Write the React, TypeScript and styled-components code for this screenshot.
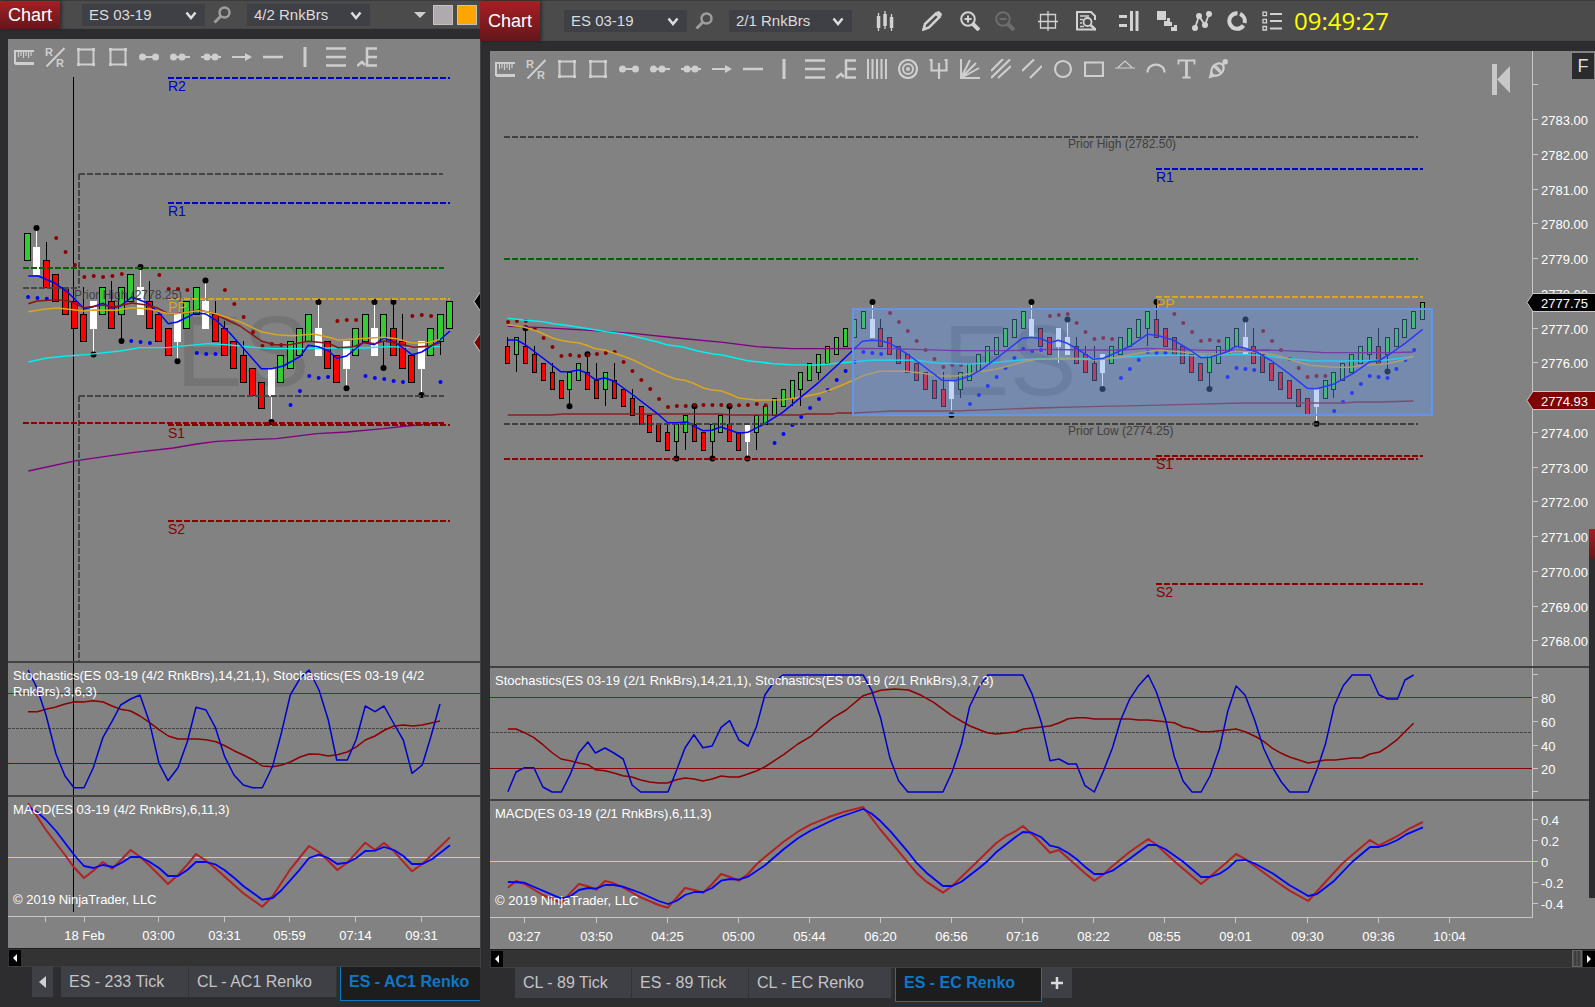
import React from 'react';
import styled, { createGlobalStyle } from 'styled-components';

const GlobalStyle = createGlobalStyle`
  *, *::before, *::after { box-sizing: border-box; }
  html, body { margin: 0; height: 100%; background: #2d2d30; }
  body { font-family: "Liberation Sans", Arial, sans-serif; overflow: hidden; }
  button, select { font: inherit; color: inherit; border: 0; margin: 0; padding: 0; }
`;

const SANS = '"Liberation Sans", Arial, sans-serif';

/* ---------- window frame ---------- */

const Desktop = styled.main`
  position: relative;
  display: flex;
  height: 100vh;
  background: #2d2d30;
`;

const Window = styled.section<{ $width?: number }>`
  display: flex;
  flex-direction: column;
  flex: ${(p) => (p.$width ? `0 0 ${p.$width}px` : '1 1 0')};
  min-width: 0;
  overflow: hidden;
`;

const TitleBar = styled.header<{ $height: number }>`
  display: flex;
  align-items: center;
  flex: none;
  height: ${(p) => p.$height}px;
  background: #4b4b4b;
  border-top: 1px solid #3c3c3e;
  box-shadow: inset 0 -1px 0 #454547;
`;

const WindowLabel = styled.h1`
  display: flex;
  align-items: center;
  align-self: stretch;
  flex: none;
  width: 60px;
  margin: 0;
  padding-left: 8px;
  font-size: 18px;
  font-weight: 400;
  color: #fff;
  background: linear-gradient(#a61f24, #64171a);
  box-shadow: 2px 0 3px rgba(0, 0, 0, 0.4);
`;

const PickerBox = styled.label`
  position: relative;
  display: flex;
  flex: none;
  width: 123px;
  height: 22px;
  color: #dcdcdc;
  background: #3f3f46;
`;

const PickerSelect = styled.select`
  width: 100%;
  padding-left: 7px;
  font-size: 15px;
  line-height: 22px;
  appearance: none;
  background: transparent;
`;

const PickerChevron = styled.svg`
  position: absolute;
  right: 8px;
  top: 7px;
  pointer-events: none;
`;

const PickerGroup = styled.div<{ $indent: number }>`
  display: flex;
  align-items: center;
  gap: 8px;
  flex: none;
  margin-left: ${(p) => p.$indent}px;
`;

const IconButton = styled.button<{ $size?: number }>`
  display: flex;
  align-items: center;
  justify-content: center;
  flex: none;
  width: ${(p) => p.$size ?? 22}px;
  height: ${(p) => p.$size ?? 22}px;
  background: transparent;
`;

const LinkGroup = styled.div`
  display: flex;
  align-items: center;
  gap: 4px;
  margin-left: auto;
  padding-right: 3px;
`;

const LinkSwatch = styled.button<{ $color: string }>`
  width: 20px;
  height: 20px;
  background: ${(p) => p.$color};
  border: 1px solid #c9c2bb;
`;

const ToolStrip = styled.div`
  display: grid;
  grid-template-columns: 47px 38px 35px 43px 38px 43px 38px 35px 35px 35px 22px;
  margin-left: 22px;
  color: #d2d2d2;
`;

const Clock = styled.time`
  margin-left: 11px;
  font-family: "Open Sans", "Noto Sans", sans-serif;
  font-size: 24px;
  line-height: 28px;
  color: #ffff00;
`;

const Body = styled.div`
  display: flex;
  flex-direction: column;
  flex: 1 1 0;
  min-height: 0;
  padding: 10px 0 0 8px;
`;

const RightBody = styled(Body)`
  padding-left: 9px;
  border-left: 1px solid #3f3f42;
`;

const ChartArea = styled.div`
  position: relative;
  display: flex;
  flex-direction: column;
  flex: 1 1 0;
  min-height: 0;
  background: #828282;
`;

const DrawingBar = styled.div<{ $left: number; $top: number; $width: number }>`
  position: absolute;
  z-index: 1;
  left: ${(p) => p.$left}px;
  top: ${(p) => p.$top}px;
  width: ${(p) => p.$width}px;
  display: flex;
  justify-content: space-between;
  color: #cecece;
`;

const Pane = styled.div<{ $height?: number }>`
  position: relative;
  display: flex;
  flex: ${(p) => (p.$height ? `0 0 ${p.$height}px` : '1 1 0')};
  min-height: 0;
  border-top: ${(p) => (p.$height ? '2px solid #414143' : '0')};
`;

const Plot = styled.svg`
  display: block;
  flex: 1 1 0;
  width: 0;
  min-width: 0;
  height: 100%;
`;

const Scale = styled.svg`
  display: block;
  flex: none;
  width: 63px;
  height: 100%;
  overflow: visible;
  border-left: 1px solid #c8c8c8;
`;

const TimeScale = styled.svg`
  display: block;
  flex: none;
  width: 100%;
  height: 32px;
`;

const PaneCaption = styled.p<{ $top?: number; $bottom?: number }>`
  position: absolute;
  left: 5px;
  ${(p) => (p.$bottom === undefined ? `top: ${p.$top}px;` : `bottom: ${p.$bottom}px;`)}
  max-width: calc(100% - 30px);
  margin: 0;
  font-size: 13px;
  line-height: 16px;
  color: #fff;
`;

const CornerButton = styled.button`
  position: absolute;
  z-index: 1;
  top: 2px;
  right: 1px;
  width: 22px;
  height: 26px;
  font-size: 18px;
  color: #dedede;
  background: #2b2b2e;
`;

const SkipButton = styled.button`
  position: absolute;
  z-index: 1;
  top: 13px;
  right: 84px;
  width: 19px;
  height: 31px;
  background: transparent;
`;

const ScrollTrack = styled.div`
  display: flex;
  align-items: center;
  flex: none;
  height: 19px;
  padding-left: 1px;
  background: #333334;
  border-top: 1px solid #1f1f20;
  border-bottom: 1px solid #3f3f42;
`;

const ScrollButton = styled.button`
  display: flex;
  align-items: center;
  justify-content: center;
  width: 12px;
  height: 16px;
  background: #000;
`;

const ScrollGrip = styled.button`
  width: 10px;
  height: 17px;
  margin-left: auto;
  margin-right: 1px;
  background: linear-gradient(90deg, #555, #333 40%, #777 50%, #333 60%, #555);
  border: 1px solid #666;
`;

const TabRow = styled.nav<{ $indent: number; $height: number }>`
  display: flex;
  align-items: flex-start;
  flex: none;
  height: ${(p) => p.$height}px;
  padding-left: ${(p) => p.$indent}px;
  white-space: nowrap;
`;

const Tab = styled.button<{ $width: number }>`
  flex: none;
  width: ${(p) => p.$width}px;
  height: 30px;
  padding-left: 8px;
  font-size: 16px;
  text-align: left;
  color: #c4c4c4;
  background: #3f3f46;
  border-right: 1px solid #333337;
`;

const ActiveTab = styled(Tab)`
  height: 34px;
  margin-left: 3px;
  padding-bottom: 4px;
  font-weight: 700;
  color: #0e78c8;
  background: #1d1d1e;
  border: 1px solid #0a76c4;
  border-top: 0;
`;

const SmallTab = styled.button<{ $width: number; $gap: number }>`
  display: flex;
  align-items: center;
  justify-content: center;
  flex: none;
  width: ${(p) => p.$width}px;
  height: 30px;
  margin-right: ${(p) => p.$gap}px;
  color: #dcdcdc;
  background: #3f3f46;
`;

const NeighbourEdge = styled.aside`
  position: absolute;
  z-index: 2;
  top: 529px;
  right: 0;
  width: 6px;
  height: 369px;
  background: linear-gradient(#a61f24, #64171a 29px, #2d2d30 30px);
`;

/* ---------- icons ---------- */

const Glyph = ({ children, size = 20 }: { children: React.ReactNode; size?: number }) => (
  <svg width={size} height={size} viewBox="0 0 20 20" fill="none" stroke="currentColor" strokeWidth="2">
    {children}
  </svg>
);

const region = (
  <>
    <path d="M3 2.5H17M3 17.500H17M2.500 3V17M17.500 3V17" />
    <path d="M1 1h3v3H1zM16 1h3v3h-3zM1 16h3v3H1zM16 16h3v3h-3z" fill="currentColor" stroke="none" />
  </>
);

const drawingTools: [string, React.ReactNode][] = [
  ['Ruler', <><path d="M20 4H1V16H20" /><path d="M1 16.500H20" strokeWidth="3" /><path d="M4.500 4v6M7 4v5M9.500 4v7M12 4v5M14.500 4v7M17 4v5" strokeWidth="1.2" /></>],
  ['Risk-Reward', <><path d="M1.500 19.500 19.500 1" /><text x="0" y="9" fontFamily={SANS} fontSize="11" fontWeight="700" fill="currentColor" stroke="none">R</text><text x="11" y="19.500" fontFamily={SANS} fontSize="11" fontWeight="700" fill="currentColor" stroke="none">R</text></>],
  ['Region Highlight X', region],
  ['Region Highlight Y', region],
  ['Line', <><path d="M3 10H17" /><g fill="currentColor" stroke="none"><circle cx="3.500" cy="10" r="3.500" /><circle cx="16.500" cy="10" r="3.500" /></g></>],
  ['Ray', <><path d="M3 10H20" /><g fill="currentColor" stroke="none"><circle cx="3.500" cy="10" r="3.500" /><circle cx="12" cy="10" r="3.500" /></g></>],
  ['Extended Line', <><path d="M0 10H20" /><g fill="currentColor" stroke="none"><circle cx="6" cy="10" r="3.500" /><circle cx="14" cy="10" r="3.500" /></g></>],
  ['Arrow Line', <><path d="M0 10H15" /><path d="M13 6 20 10 13 14z" fill="currentColor" stroke="none" /></>],
  ['Horizontal Line', <path d="M0 10H20" strokeWidth="2.500" />],
  ['Vertical Line', <path d="M10 0V20" strokeWidth="3" />],
  ['Fibonacci Retracements', <path d="M0 1.500H20M0 10H20M0 18.500H20" strokeWidth="2.500" />],
  ['Fibonacci Extensions', <><path d="M20 1.500H10V18.500H20M10 10H20" strokeWidth="2.500" /><path d="M0 19 5 15 8 18" strokeWidth="2.500" /></>],
  ['Fibonacci Time', <path d="M1 0V20M5.500 0V20M10 0V20M14.500 0V20M19 0V20" />],
  ['Fibonacci Circle', <><circle cx="10" cy="10" r="9" strokeWidth="2.200" /><circle cx="10" cy="10" r="5" /><circle cx="10" cy="10" r="2" fill="currentColor" stroke="none" /></>],
  ['Pitchfork', <path d="M2.500 0V11.500H17.500V0M10 4V20M0.500 1H3M15.500 1H18" strokeWidth="2.200" />],
  ['Gann Fan', <path d="M1 0V19H20M1 19 10 1M1 19 16 4M1 19 19 9" />],
  ['Regression Channel', <path d="M0 12 12 0M0 19 19 0.500M7 19 20 7" strokeWidth="2.200" />],
  ['Trend Channel', <path d="M0 12 12 0.500M8 19 20 7" strokeWidth="2.200" />],
  ['Ellipse', <circle cx="10" cy="10" r="8" strokeWidth="2.200" />],
  ['Rectangle', <path d="M1 3.500H19V17H1z" strokeWidth="2.200" />],
  ['Triangle', <path d="M3 8.500 10 2 17 8.500M0 9H20" strokeWidth="1.200" />],
  ['Arc', <path d="M1.500 13.500C1.500 3 18.500 3 18.500 13.500" strokeWidth="2.200" />],
  ['Text', <><path d="M9.500 1V19" strokeWidth="2.800" /><path d="M1.500 5.500V1.500H17.500V5.500M5.500 18.500H13.500" strokeWidth="1.800" /></>],
  ['Chart Marker', <><path d="M0.500 19.500 2.500 12.500 7.500 17.500z" fill="currentColor" stroke="none" /><ellipse cx="9.500" cy="10.500" rx="7" ry="5.300" transform="rotate(-45 9.500 10.500)" strokeWidth="2.200" /><path d="M6 7.500 13 14M15 5.500 18 2.500" strokeWidth="2" /><path d="M7.500 6.500 13 12" strokeWidth="1.500" /><circle cx="17.200" cy="2.800" r="2.700" fill="currentColor" stroke="none" /></>],
];

const chartTools: [string, React.ReactNode][] = [
  ['Bar style', <><path d="M3.500 2V20M10 0V18M16.500 3V20" strokeWidth="1.300" /><path d="M1.800 5h3.500v12H1.800zM8.300 3h3.500v12H8.300zM14.800 6h3.500v11h-3.500z" fill="currentColor" stroke="none" /></>],
  ['Drawing tools', <><path d="M3 13 14 2.500 17.500 6 7 16.500 1.500 18.500z" strokeWidth="2.500" /><path d="M14 1 19 6 20 3 17 0z" fill="currentColor" stroke="none" /></>],
  ['Zoom in', <><circle cx="8" cy="8" r="6.800" /><path d="M8 4.500V11.500M4.500 8H11.500" /><path d="M13 13 19 19" strokeWidth="4" /></>],
  ['Zoom out', <g opacity="0.25"><circle cx="8" cy="8" r="6.800" /><path d="M4.500 8H11.500" /><path d="M13 13 19 19" strokeWidth="4" /></g>],
  ['Cursor', <path d="M2.500 3.500H17.500V17H2.500zM10 0V20M0 10.500H20" strokeWidth="1.300" />],
  ['Data box', <><path d="M19 9V5L15 1H1V18.500H19" strokeWidth="2" /><path d="M4 5H13M4 8.500H7M4 12H6M4 15.500H8" strokeWidth="1.400" /><circle cx="11.500" cy="11" r="4" strokeWidth="1.800" /><path d="M14.500 14 20 19" strokeWidth="2.500" /></>],
  ['Chart trader', <><path d="M12.500 0V20M18 0V20" strokeWidth="3" /><path d="M1 5.500H8M1 14.500H8M0 5.500H4M0 14.500H4" strokeWidth="3" /></>],
  ['Data series', <path d="M0 0h9v9H0zM10 7h3v4h2v4H7v-5h3zM17 14h3v6h-6v-4h3z" fill="currentColor" stroke="none" />],
  ['Indicators', <><path d="M3 17 7 5 13 14 17 3" strokeWidth="1.800" /><g fill="currentColor" stroke="none"><circle cx="3" cy="17" r="3" /><circle cx="7" cy="5" r="3" /><circle cx="13" cy="14" r="3" /><circle cx="17" cy="3" r="3" /></g></>],
  ['Strategies', <path d="M10.500 2.200A7.800 7.800 0 1 0 16.500 14.500M13 2.800A7.800 7.800 0 0 1 17.500 12" strokeWidth="4" />],
  ['Properties', <><path d="M8 3H20M8 10H20M8 17.500H20" strokeWidth="2.200" /><path d="M1 1.200h3.500v3.500H1zM1 8.300h3.500v3.500H1zM1 15.500h3.500v3.500H1z" strokeWidth="1.300" /></>],
];

const SearchGlyph = () => (
  <svg width="18" height="18" viewBox="0 0 18 18" fill="none" stroke="#9d9d9d">
    <circle cx="11.500" cy="6.500" r="5" strokeWidth="2.500" />
    <path d="M8 10 1.500 16.500" strokeWidth="3" />
  </svg>
);

const Picker = ({ label, value, options }: { label: string; value: string; options: string[] }) => (
  <PickerBox>
    <PickerSelect aria-label={label} defaultValue={value}>
      {options.map((o) => <option key={o}>{o}</option>)}
    </PickerSelect>
    <PickerChevron width="12" height="10" viewBox="0 0 12 10" fill="none" stroke="#dedede" strokeWidth="2.500">
      <path d="M1.500 1.500 6 7 10.500 1.500" />
    </PickerChevron>
  </PickerBox>
);

const Pickers = ({ indent, period }: { indent: number; period: string }) => (
  <PickerGroup $indent={indent}>
    <Picker label="Instrument" value="ES 03-19" options={['ES 03-19']} />
    <IconButton aria-label="Search instrument" $size={18}><SearchGlyph /></IconButton>
    <span />
    <Picker label="Period" value={period} options={[period]} />
  </PickerGroup>
);

const DrawingTools = ({ count, left, top, width }: { count: number; left: number; top: number; width: number }) => (
  <DrawingBar role="toolbar" aria-label="Drawing tools" $left={left} $top={top} $width={width}>
    {drawingTools.slice(0, count).map(([name, art]) => (
      <IconButton key={name} aria-label={name} $size={20}><Glyph>{art}</Glyph></IconButton>
    ))}
  </DrawingBar>
);

/* ---------- chart primitives ---------- */

type Pt = [number, number];
/* [originX, originY, units per pixel in x, units per pixel in y] */
type Grid = [number, number, number, number];

const toPixels = (pts: Pt[], [ox, oy, ux, uy]: Grid): string =>
  pts.map(([x, y]) => `${(ox + x / ux).toFixed(1)},${(oy + y / uy).toFixed(1)}`).join(' ');

const Trace = ({ parts, color, width = 1.5 }: { parts: [Pt[], Grid][]; color: string; width?: number }) => (
  <polyline points={parts.map(([p, g]) => toPixels(p, g)).join(' ')} fill="none" stroke={color} strokeWidth={width} strokeLinejoin="round" />
);

const Dashes = ({ x1, x2, y, color }: { x1: number; x2: number; y: number; color: string }) => (
  <path d={`M${x1} ${y}H${x2}`} stroke={color} strokeWidth="2" strokeDasharray="6 2" shapeRendering="crispEdges" />
);

const Level = ({ y, color, dash }: { y: number; color: string; dash?: boolean }) => (
  <path d={`M0 ${y}.5H2000`} stroke={color} strokeDasharray={dash ? '3 1' : undefined} shapeRendering="crispEdges" />
);

const Label = ({ x, y, color, size = 14, children }: { x: number; y: number; color: string; size?: number; children: React.ReactNode }) => (
  <text x={x} y={y} fill={color} fontSize={size} fontFamily={SANS}>{children}</text>
);

/* kind, body bottom, wick end (above or below the body), swing marker */
type Bar = ['g' | 'r' | 'w', number, number?, 1?];
type Sar = ['r' | 'b', number, number[]];

interface Series {
  x0: number;
  step: number;
  bodyWidth: number;
  yOf: (k: number) => number;
  bars: Bar[];
}

const FILL = { g: '#32cd32', r: '#ff0000', w: '#ffffff' };

const Candles = ({ x0, step, bodyWidth, yOf, bars }: Series) => (
  <g>
    {bars.map(([kind, base, wick, dot], i) => {
      const cx = Math.round(x0 + i * step - 0.5) + 0.5;
      const top = Math.round(yOf(base + 2)) + 0.5;
      const bottom = Math.round(yOf(base)) + 0.5;
      const line = kind === 'w' ? '#ffffff' : '#000000';
      const half = (bodyWidth - 1) / 2;
      return (
        <g key={i}>
          {wick !== undefined && (
            <path d={`M${cx} ${wick > base ? top : bottom}V${yOf(wick)}`} stroke={line} shapeRendering="crispEdges" />
          )}
          {dot && <circle cx={cx} cy={yOf(wick as number)} r="3" fill="#000" />}
          <rect x={cx - half} y={top} width={half * 2} height={bottom - top} fill={FILL[kind]} stroke={line} shapeRendering="crispEdges" />
        </g>
      );
    })}
  </g>
);

const SarDots = ({ runs, x0, step, originY }: { runs: Sar[]; x0: number; step: number; originY: number }) => (
  <g>
    {runs.flatMap(([tone, start, ys]) =>
      ys.map((y, i) => (
        <circle key={`${start}-${i}`} cx={x0 + (start + i) * step} cy={originY + y / 3} r="2" fill={tone === 'r' ? '#8b0000' : '#0000ff'} />
      )),
    )}
  </g>
);

/* ---------- left chart data ---------- */

const L_X0 = 27.6;
const L_STEP = 9.373;
const lBars: Bar[] = [
  ['g', 9], ['w', 8, 11.4, 1], ['r', 7, 10.4], ['r', 6], ['r', 5], ['r', 4], ['r', 3, 7], ['w', 4, 2, 1], ['g', 5],
  ['r', 4, 7.5], ['g', 5, 3, 1], ['g', 6], ['w', 5, 8.5, 1], ['r', 4, 7.5], ['r', 3], ['r', 2], ['w', 3, 1.5, 1],
  ['g', 4], ['g', 5], ['w', 4, 7.5, 1], ['r', 3, 6], ['r', 2, 4.5], ['r', 1], ['r', 0, 3], ['r', -1], ['r', -2],
  ['w', -1, -3, 1], ['g', 0], ['g', 1], ['g', 2], ['g', 3], ['w', 2, 5.9, 1], ['r', 1], ['r', 0], ['w', 1, -0.5, 1],
  ['g', 2], ['g', 3], ['w', 2, 5.9, 1], ['g', 3, 1, 1], ['r', 2, 5.9, 1], ['r', 1, 5], ['r', 0], ['w', 1, -1, 1],
  ['g', 2], ['g', 3, 2], ['g', 4],
];
const lSar: Sar[] = [
  ['b', 0, [291, 294, 296]], ['r', 3, [114, 156, 195, 231, 228, 231, 228, 222]], ['b', 11, [423, 426, 429]],
  ['r', 14, [225, 267, 267, 270]], ['b', 18, [459, 462, 462]], ['r', 21, [270, 312, 351, 396, 438, 432, 435]],
  ['b', 28, [615, 573, 528, 534, 531]], ['r', 33, [363, 360, 360]], ['b', 36, [528, 534, 537, 543, 546]],
  ['r', 41, [348, 345, 348]], ['b', 44, [546]],
];
const L_GRID: Grid = [0, 200, 3, 3];
const lFast: Pt[] = [[85, 228], [115, 228], [166, 250], [205, 278], [253, 326], [280, 320], [309, 310], [336, 324], [361, 319], [395, 291], [440, 308], [475, 336], [505, 371], [532, 366], [586, 340], [615, 341], [650, 362], [690, 400], [784, 506], [815, 506], [850, 498], [900, 470], [925, 436], [955, 440], [985, 452], [1010, 475], [1040, 468], [1090, 427], [1123, 434], [1152, 414], [1190, 430], [1236, 464], [1265, 456], [1310, 428], [1350, 393]];
const lMid: Pt[] = [[85, 311], [112, 303], [170, 299], [205, 302], [253, 323], [309, 315], [340, 321], [395, 309], [440, 315], [475, 325], [505, 342], [560, 338], [595, 330], [640, 340], [720, 378], [784, 423], [824, 434], [870, 434], [925, 424], [985, 430], [1015, 443], [1060, 440], [1095, 427], [1125, 431], [1152, 423], [1190, 430], [1240, 442], [1290, 438], [1320, 428]];
const lSlow: Pt[] = [[85, 335], [130, 328], [172, 324], [253, 333], [280, 330], [350, 331], [395, 323], [450, 327], [505, 341], [545, 340], [592, 332], [620, 335], [650, 342], [720, 365], [784, 395], [830, 404], [880, 407], [940, 402], [980, 410], [1015, 420], [1050, 418], [1100, 415], [1152, 412], [1190, 416], [1236, 429], [1290, 427], [1320, 418]];
const lCyan: Pt[] = [[85, 486], [140, 474], [200, 468], [260, 464], [360, 453], [420, 443], [500, 443], [560, 437], [625, 431], [690, 435], [750, 441], [820, 446], [900, 446], [1000, 444], [1090, 444], [1160, 440], [1230, 442], [1320, 440]];
const lPurple: Pt[] = [[85, 813], [229, 782], [397, 758], [520, 744], [590, 732], [650, 724], [770, 718], [830, 716], [950, 701], [1040, 696], [1150, 686], [1220, 678], [1270, 674], [1320, 668]];

const L_LOW: Grid = [0, 650, 3, 3];
const lStochSlow: Pt[] = [[84, 185], [112, 185], [140, 177], [165, 172], [195, 162], [225, 155], [250, 156], [280, 152], [310, 156], [336, 168], [362, 178], [392, 183], [420, 198], [448, 217], [477, 239], [505, 258], [534, 267], [590, 267], [618, 269], [648, 275], [676, 288], [702, 302], [730, 315], [760, 330], [787, 348], [818, 350], [845, 345], [871, 336], [900, 321], [928, 312], [957, 313], [985, 318], [1012, 314], [1042, 306], [1070, 290], [1096, 270], [1125, 258], [1154, 240], [1180, 229], [1210, 225], [1238, 228], [1267, 225], [1320, 213]];
const lStochFast: Pt[] = [[84, 60], [110, 112], [138, 195], [168, 312], [195, 378], [222, 413], [252, 413], [280, 353], [309, 262], [336, 214], [362, 165], [392, 147], [420, 135], [448, 215], [477, 340], [504, 392], [534, 353], [562, 275], [588, 172], [618, 180], [646, 232], [674, 320], [702, 375], [730, 405], [758, 413], [787, 413], [818, 348], [845, 245], [871, 135], [900, 85], [927, 60], [957, 120], [985, 210], [1010, 330], [1042, 330], [1069, 268], [1096, 168], [1125, 185], [1152, 168], [1182, 222], [1210, 270], [1236, 370], [1267, 345], [1292, 262], [1320, 162]];
const lMacd: Pt[] = [[84, 460], [110, 498], [138, 540], [195, 615], [222, 652], [252, 684], [280, 662], [309, 636], [336, 656], [365, 628], [392, 600], [420, 620], [450, 648], [504, 702], [534, 675], [562, 644], [588, 612], [618, 632], [646, 655], [730, 730], [787, 770], [818, 738], [871, 658], [927, 588], [957, 606], [985, 632], [1012, 660], [1042, 638], [1096, 578], [1125, 600], [1152, 579], [1180, 602], [1236, 664], [1267, 642], [1350, 562]];
const lSignal: Pt[] = [[84, 472], [110, 485], [138, 510], [168, 543], [225, 618], [252, 648], [280, 654], [309, 645], [340, 651], [365, 638], [392, 621], [420, 621], [448, 635], [477, 654], [504, 678], [534, 678], [562, 660], [588, 636], [618, 636], [648, 644], [674, 661], [702, 683], [730, 708], [787, 749], [818, 744], [845, 720], [900, 658], [927, 624], [957, 614], [985, 624], [1012, 642], [1042, 638], [1069, 624], [1096, 603], [1125, 602], [1152, 591], [1182, 600], [1210, 618], [1236, 642], [1267, 642], [1296, 628], [1350, 586]];
const lTimes: [number, string][] = [[45, ''], [84, '18 Feb'], [158, '03:00'], [224, '03:31'], [289, '05:59'], [355, '07:14'], [421, '09:31']];

/* ---------- right chart data ---------- */

const R_X0 = 507.8;
const R_STEP = 8.883;
const rBars: Bar[] = [
  ['r', 11, 14], ['g', 12, 10], ['r', 11, 15, 1], ['r', 10, 13], ['r', 9], ['r', 8, 11], ['r', 7], ['g', 8, 6, 1],
  ['g', 9], ['r', 8, 12, 1], ['r', 7, 11], ['g', 8, 6], ['r', 7, 11], ['r', 6], ['r', 5, 8], ['r', 4], ['r', 3],
  ['r', 2], ['r', 1, 4], ['g', 2, 0, 1], ['g', 3, 1], ['r', 2, 6, 1], ['r', 1], ['g', 2, 0, 1], ['g', 3],
  ['r', 2, 6, 1], ['r', 1], ['w', 2, 0, 1], ['g', 3, 1], ['g', 4], ['g', 5], ['g', 6], ['g', 7, 6], ['g', 8, 6],
  ['g', 9], ['g', 10, 9], ['g', 11], ['g', 12], ['g', 13], ['g', 14], ['g', 15], ['w', 14, 18, 1], ['r', 13, 16],
  ['r', 12], ['r', 11], ['r', 10], ['r', 9], ['r', 8], ['r', 7], ['r', 6, 10], ['w', 7, 5, 1], ['g', 8, 7], ['g', 9],
  ['g', 10], ['g', 11], ['g', 12], ['g', 13], ['g', 14], ['g', 15], ['w', 14, 18, 1], ['r', 13], ['r', 12],
  ['w', 13, 11], ['w', 12, 16, 1], ['r', 11, 14], ['r', 10, 13], ['r', 9, 13], ['w', 10, 8, 1], ['g', 11], ['g', 12],
  ['g', 13], ['g', 14], ['g', 15, 13], ['r', 14, 18, 1], ['r', 13], ['r', 12], ['r', 11], ['r', 10], ['r', 9],
  ['g', 10, 8, 1], ['g', 11], ['g', 12], ['g', 13], ['w', 12, 16, 1], ['r', 11, 15], ['r', 10], ['r', 9], ['r', 8],
  ['r', 7], ['r', 6], ['r', 5], ['w', 6, 4, 1], ['g', 7], ['g', 8, 7], ['g', 9], ['g', 10], ['g', 11], ['g', 12, 11],
  ['r', 11, 15], ['g', 12, 10, 1], ['g', 13], ['g', 14], ['g', 15], ['g', 16],
];
const rSar: Sar[] = [
  ['r', 0, [126, 123, 123, 147, 174, 201, 228, 225, 228, 225, 222, 219, 216, 246, 273, 300, 327, 357, 381, 378, 378, 375, 375, 375, 375, 376, 376, 375, 372, 376]],
  ['b', 30, [489, 462, 435, 411, 384, 357, 330, 300, 273, 246, 216, 219, 222]],
  ['r', 43, [99, 126, 153, 183, 210, 237, 261, 255, 255]],
  ['b', 52, [372, 345, 318, 291, 264, 234, 207, 213, 210]],
  ['r', 61, [108, 105, 102, 129, 156, 177, 174, 177]],
  ['b', 69, [294, 267, 240, 216, 219, 219]],
  ['r', 75, [102, 129, 156, 183, 180, 183]],
  ['b', 81, [291, 264, 267, 270]],
  ['r', 85, [153, 183, 210, 237, 264, 291, 288, 288]],
  ['b', 93, [393, 366, 339, 312, 288, 291, 294, 267, 240, 210]],
];
const R_GRID: Grid = [490, 280, 3, 3];
const rFast: Pt[] = [[53, 180], [80, 180], [104, 193], [131, 213], [212, 275], [238, 275], [265, 270], [285, 277], [316, 299], [344, 294], [371, 303], [425, 342], [506, 404], [533, 428], [560, 428], [590, 426], [638, 452], [665, 451], [692, 441], [719, 450], [746, 460], [773, 457], [824, 431], [878, 397], [932, 352], [986, 307], [1040, 257], [1087, 212], [1117, 184], [1144, 181], [1171, 182], [1200, 190], [1252, 222], [1300, 258], [1357, 301], [1395, 302], [1440, 288], [1475, 268], [1517, 237], [1570, 196], [1597, 175], [1625, 172], [1655, 176], [1678, 188], [1705, 181], [1732, 190], [1762, 207], [1810, 238], [1840, 235], [1870, 222], [1920, 199], [1972, 163], [2000, 166], [2050, 180], [2100, 210], [2132, 233], [2160, 232], [2210, 216], [2237, 199], [2263, 204], [2300, 216], [2345, 243], [2400, 283], [2452, 325], [2480, 326], [2530, 313], [2590, 280], [2640, 245], [2665, 243], [2700, 222], [2745, 190], [2798, 148]];
const rCyan: Pt[] = [[53, 115], [100, 120], [160, 125], [190, 131], [240, 137], [300, 147], [350, 155], [400, 162], [450, 173], [500, 185], [530, 194], [580, 201], [620, 212], [665, 221], [700, 226], [740, 235], [773, 242], [850, 251], [905, 254], [985, 255], [1040, 250], [1110, 244], [1150, 240], [1280, 241], [1330, 248], [1430, 252], [1500, 249], [1560, 243], [1620, 238], [1705, 235], [1840, 236], [1900, 232], [1970, 227], [2050, 225], [2150, 228], [2240, 223], [2310, 226], [2380, 234], [2460, 242], [2540, 243], [2620, 242], [2690, 240], [2770, 230]];
const rSlow: Pt[] = [[53, 134], [104, 142], [140, 153], [190, 175], [212, 181], [240, 186], [265, 188], [290, 196], [316, 206], [344, 210], [400, 229], [430, 240], [480, 265], [530, 287], [557, 297], [584, 301], [610, 310], [640, 324], [665, 330], [692, 332], [719, 342], [746, 354], [797, 360], [878, 359], [932, 352], [985, 341], [1013, 332], [1050, 318], [1125, 285], [1170, 274], [1240, 273], [1300, 280], [1345, 288], [1400, 288], [1440, 281], [1530, 265], [1597, 246], [1640, 238], [1740, 236], [1820, 240], [1870, 234], [1930, 223], [1970, 215], [2010, 211], [2070, 215], [2130, 222], [2200, 222], [2237, 213], [2300, 216], [2370, 228], [2410, 242], [2460, 256], [2530, 262], [2580, 262], [2630, 255], [2690, 251], [2740, 240], [2770, 227]];
const rPurple: Pt[] = [[53, 139], [160, 143], [300, 151], [430, 160], [560, 174], [700, 187], [800, 200], [905, 206], [1000, 206], [1110, 205], [1200, 206], [1400, 212], [1560, 212], [1680, 208], [1770, 210], [1900, 210], [1970, 205], [2060, 208], [2150, 211], [2330, 210], [2450, 215], [2500, 218], [2700, 218], [2770, 216]];
const rMaroon: Pt[] = [[53, 405], [180, 405], [220, 402], [690, 402], [720, 405], [930, 405], [950, 402], [1030, 402], [1040, 399], [1090, 399], [1170, 395], [1200, 393], [1390, 393], [1530, 388], [1640, 384], [1800, 380], [1950, 377], [2100, 373], [2260, 369], [2560, 369], [2600, 366], [2670, 366], [2770, 363]];

const R_EARLY: Grid = [480, 650, 2.8, 3];
const R_LATE: Grid = [1035, 500, 2.8, 3];
const rStochSlow: [Pt[], Grid][] = [
  [[[78, 237], [101, 237], [125, 248], [151, 263], [176, 284], [203, 309], [227, 327], [252, 332], [277, 339], [302, 344], [323, 359], [350, 362], [375, 369], [400, 377], [425, 381], [450, 390], [475, 396], [500, 399], [525, 399], [550, 389], [574, 384], [600, 387], [624, 393], [650, 387], [675, 378], [700, 381], [725, 381], [750, 372], [775, 362], [797, 351], [850, 314], [890, 282], [925, 260], [950, 236], [990, 202], [1025, 180], [1073, 137], [1122, 121], [1160, 117], [1200, 120], [1235, 136], [1270, 157], [1320, 196], [1372, 228], [1420, 248], [1445, 252], [1500, 246], [1522, 237]], R_EARLY],
  [[[0, 683], [18, 681], [42, 678], [67, 669], [93, 656], [120, 653], [140, 653], [167, 657], [265, 657], [290, 660], [317, 660], [390, 668], [415, 681], [440, 686], [463, 695], [490, 695], [563, 687], [590, 696], [620, 711], [640, 724], [665, 745], [690, 760], [713, 771], [765, 789], [813, 780], [840, 780], [888, 774], [915, 774], [938, 762], [965, 756], [988, 740], [1015, 718], [1038, 693], [1060, 670]], R_LATE],
];
const rStochFast: [Pt[], Grid][] = [
  [[[78, 425], [101, 366], [125, 353], [151, 353], [176, 411], [202, 426], [228, 426], [254, 370], [277, 308], [302, 276], [323, 309], [350, 294], [375, 309], [401, 327], [426, 405], [450, 426], [526, 426], [550, 362], [574, 294], [599, 254], [624, 293], [650, 288], [675, 232], [699, 212], [725, 270], [751, 288], [774, 230], [798, 134], [825, 94], [848, 75], [1073, 75], [1097, 122], [1122, 205], [1148, 325], [1172, 392], [1198, 426], [1296, 426], [1322, 366], [1348, 282], [1371, 170], [1397, 112], [1422, 75], [1520, 75], [1545, 130]], R_EARLY],
  [[[0, 608], [18, 668], [42, 782], [67, 777], [93, 792], [116, 792], [140, 857], [166, 876], [192, 812], [217, 743], [240, 660], [265, 598], [290, 557], [317, 525], [340, 576], [365, 657], [390, 770], [415, 844], [440, 876], [465, 876], [490, 828], [517, 745], [540, 632], [563, 558], [588, 585], [614, 657], [640, 745], [665, 802], [690, 846], [713, 876], [765, 876], [790, 808], [813, 733], [838, 617], [863, 557], [888, 525], [938, 525], [963, 584], [988, 597], [1015, 597], [1036, 540], [1060, 525]], R_LATE],
];
const rMacd: [Pt[], Grid][] = [
  [[[78, 713], [101, 693], [125, 702], [176, 735], [228, 759], [254, 728], [277, 702], [300, 708], [325, 719], [350, 693], [375, 700], [400, 712], [450, 742], [500, 765], [526, 773], [550, 744], [574, 714], [600, 720], [625, 728], [650, 702], [675, 672], [700, 681], [725, 692], [750, 672], [775, 642], [798, 621], [850, 575], [890, 545], [925, 524], [975, 502], [1020, 485], [1073, 471], [1122, 540], [1172, 604], [1222, 668], [1250, 695], [1296, 728], [1322, 708], [1397, 630], [1445, 580], [1470, 560], [1497, 545], [1520, 528], [1545, 552]], R_EARLY],
  [[[0, 1010], [42, 1058], [67, 1050], [93, 1075], [140, 1120], [166, 1142], [190, 1124], [217, 1098], [265, 1056], [317, 1017], [340, 1034], [390, 1084], [465, 1152], [490, 1130], [540, 1084], [563, 1062], [590, 1078], [665, 1137], [713, 1172], [765, 1203], [813, 1146], [863, 1088], [915, 1040], [938, 1020], [963, 1037], [1015, 1008], [1048, 986], [1086, 966]], R_LATE],
];
const rSignal: [Pt[], Grid][] = [
  [[[78, 696], [125, 698], [150, 710], [228, 746], [254, 738], [277, 720], [302, 714], [325, 716], [350, 705], [375, 705], [400, 710], [450, 729], [500, 753], [526, 762], [550, 753], [574, 735], [600, 726], [625, 726], [650, 714], [675, 692], [700, 687], [725, 689], [750, 680], [798, 646], [850, 598], [890, 565], [925, 542], [1000, 504], [1073, 477], [1097, 491], [1122, 514], [1150, 545], [1200, 608], [1222, 638], [1250, 668], [1296, 708], [1322, 708], [1348, 695], [1397, 655], [1422, 632], [1445, 607], [1497, 563], [1520, 546], [1545, 548]], R_EARLY],
  [[[0, 1003], [18, 1012], [42, 1037], [67, 1043], [93, 1059], [116, 1077], [140, 1100], [166, 1122], [192, 1122], [217, 1112], [265, 1076], [317, 1035], [340, 1035], [365, 1048], [415, 1085], [465, 1131], [490, 1131], [517, 1121], [540, 1105], [563, 1082], [590, 1080], [614, 1090], [665, 1120], [713, 1156], [740, 1172], [765, 1188], [790, 1182], [838, 1142], [888, 1086], [938, 1041], [963, 1041], [988, 1033], [1015, 1020], [1038, 1004], [1086, 982]], R_LATE],
];
const rTimes: [number, string][] = ['03:27', '03:50', '04:25', '05:00', '05:44', '06:20', '06:56', '07:16', '08:22', '08:55', '09:01', '09:30', '09:36', '10:04'].map(
  (t, i): [number, string] => [Math.round(524.4 + i * 71.1), t],
);

/* ---------- charts ---------- */

const TimeAxis = ({ times, originX, rightGap }: { times: [number, string][]; originX: number; rightGap: number }) => (
  <TimeScale>
    <svg x={-rightGap} width="100%" height="32">
      <path d="M0 0.500H3000" stroke="#c8c8c8" />
    </svg>
    <g transform={`translate(${-originX} 0)`}>
      {times.map(([x, text]) => (
        <g key={x}>
          <path d={`M${x}.5 1V6`} stroke="#c8c8c8" />
          <text x={x + 0.5} y="24" textAnchor="middle" fill="#fff" fontSize="13" fontFamily={SANS}>{text}</text>
        </g>
      ))}
    </g>
  </TimeScale>
);

const PriceFlag = ({ y, fill, text }: { y: number; fill: string; text?: string }) => (
  <g>
    <path d={`M-6 ${y}.5 0 ${y - 9}.5H70V${y + 9}.5H0z`} fill={fill} stroke="#c8c8c8" />
    {text && <text x="8" y={y + 6} fill="#fff" fontSize="13" fontFamily={SANS}>{text}</text>}
  </g>
);

const ScaleTick = ({ y, text }: { y: number; text: string }) => (
  <g>
    <path d={`M0 ${Math.round(y)}.5H5`} stroke="#c8c8c8" />
    <text x="8" y={Math.round(y) + 6} fill="#fff" fontSize="13" fontFamily={SANS}>{text}</text>
  </g>
);

const LeftChart = () => (
  <ChartArea>
    <DrawingTools count={12} left={6} top={8} width={363} />
    <Pane>
      <Plot>
        <g transform="translate(-8 -39)">
          <text x="176" y="386" fontSize="100" fontFamily={SANS} fill="#000" opacity="0.1">ES</text>
          <path d="M73.500 77V700" stroke="#000" shapeRendering="crispEdges" />
          <Trace parts={[[lPurple, L_GRID]]} color="#800080" width={1.3} />
          <Candles x0={L_X0} step={L_STEP} bodyWidth={7} yOf={(k) => 381.5 - k * 13.46} bars={lBars} />
          <SarDots runs={lSar} x0={L_X0 + 0.5} step={L_STEP} originY={200} />
          <Dashes x1={168} x2={450} y={78} color="#0000cd" />
          <Dashes x1={168} x2={450} y={203} color="#0000cd" />
          <Dashes x1={79} x2={443} y={174} color="#45454a" />
          <Dashes x1={23} x2={79} y={288} color="#45454a" />
          <Dashes x1={79} x2={444} y={396} color="#45454a" />
          <path d="M79 174V288M79 396V662" stroke="#45454a" strokeWidth="2" strokeDasharray="6 2" />
          <Dashes x1={23} x2={444} y={268} color="#006400" />
          <Dashes x1={168} x2={450} y={299} color="#daa520" />
          <Dashes x1={23} x2={444} y={423} color="#8b0000" />
          <Dashes x1={168} x2={450} y={425} color="#8b0000" />
          <Dashes x1={168} x2={450} y={521} color="#8b0000" />
          <Trace parts={[[lCyan, L_GRID]]} color="#00f0f0" width={1.3} />
          <Trace parts={[[lFast, L_GRID]]} color="#0000ff" />
          <Trace parts={[[lMid, L_GRID]]} color="#8b1414" />
          <Trace parts={[[lSlow, L_GRID]]} color="#daa520" />
          <Label x={168} y={91} color="#0000cd">R2</Label>
          <Label x={168} y={216} color="#0000cd">R1</Label>
          <Label x={168} y={312} color="#daa520">PP</Label>
          <Label x={168} y={438} color="#8b0000">S1</Label>
          <Label x={168} y={534} color="#8b0000">S2</Label>
          <Label x={74} y={299} color="#404044" size={12}>Prior High (2778.25)</Label>
          <g transform="translate(480 0)">
            <PriceFlag y={301} fill="#000" />
            <PriceFlag y={342} fill="#800000" />
          </g>
        </g>
      </Plot>
    </Pane>
    <Pane $height={134}>
      <Plot>
        <g transform="translate(-8 -663)">
          <Level y={693} color="#006400" />
          <Level y={728} color="#45454a" dash />
          <Level y={763} color="#8b0000" />
          <path d="M73.500 600V900" stroke="#000" shapeRendering="crispEdges" />
          <Trace parts={[[lStochSlow, L_LOW]]} color="#8b0000" />
          <Trace parts={[[lStochFast, L_LOW]]} color="#0000cd" />
        </g>
      </Plot>
      <PaneCaption $top={5}>Stochastics(ES 03-19 (4/2 RnkBrs),14,21,1), Stochastics(ES 03-19 (4/2 RnkBrs),3,6,3)</PaneCaption>
    </Pane>
    <Pane $height={121}>
      <Plot>
        <g transform="translate(-8 -797)">
          <Level y={857} color="#ffd700" />
          <path d="M73.500 700V912" stroke="#000" shapeRendering="crispEdges" />
          <Trace parts={[[lMacd, L_LOW]]} color="#b22222" width={2} />
          <Trace parts={[[lSignal, L_LOW]]} color="#0000ff" width={1.800} />
        </g>
      </Plot>
      <PaneCaption $top={5}>MACD(ES 03-19 (4/2 RnkBrs),6,11,3)</PaneCaption>
      <PaneCaption $bottom={8}>© 2019 NinjaTrader, LLC</PaneCaption>
    </Pane>
    <TimeAxis times={lTimes} originX={8} rightGap={0} />
  </ChartArea>
);

const PRICES = Array.from({ length: 16 }, (_, i) => 2783 - i);
const priceY = (p: number) => 119 + (2783 - p) * 34.75;

const RightChart = () => (
  <ChartArea>
    <DrawingTools count={24} left={5} top={8} width={733} />
    <CornerButton>F</CornerButton>
    <SkipButton aria-label="Go to latest bar">
      <svg width="19" height="31" viewBox="0 0 19 31" fill="#c8c8c8"><path d="M0 0H5V31H0zM5 15.500 18 2V29z" /></svg>
    </SkipButton>
    <Pane>
      <Plot>
        <g transform="translate(-490 -51)">
          <text x="943" y="395" fontSize="100" fontFamily={SANS} fill="#000" opacity="0.14">ES</text>
          <Candles x0={R_X0} step={R_STEP} bodyWidth={5} yOf={(k) => 458.5 - k * 8.69} bars={rBars} />
          <SarDots runs={rSar} x0={R_X0 + 0.3} step={R_STEP} originY={280} />
          <Trace parts={[[rPurple, R_GRID]]} color="#800080" width={1.3} />
          <Trace parts={[[rMaroon, R_GRID]]} color="#8b2020" width={1.3} />
          <Trace parts={[[rCyan, R_GRID]]} color="#00f0f0" width={1.5} />
          <Trace parts={[[rSlow, R_GRID]]} color="#daa520" />
          <Trace parts={[[rFast, R_GRID]]} color="#0000ff" />
          <Dashes x1={504} x2={1418} y={137} color="#404040" />
          <Dashes x1={504} x2={1418} y={259} color="#006400" />
          <Dashes x1={504} x2={1418} y={424} color="#404040" />
          <Dashes x1={504} x2={1418} y={459} color="#8b0000" />
          <Dashes x1={1156} x2={1423} y={169} color="#0000cd" />
          <Dashes x1={1156} x2={1423} y={297} color="#daa520" />
          <Dashes x1={1156} x2={1423} y={456} color="#8b0000" />
          <Dashes x1={1156} x2={1423} y={584} color="#8b0000" />
          <Label x={1068} y={148} color="#404040" size={12}>Prior High (2782.50)</Label>
          <Label x={1068} y={435} color="#404040" size={12}>Prior Low (2774.25)</Label>
          <Label x={1156} y={182} color="#0000cd">R1</Label>
          <Label x={1156} y={309} color="#daa520">PP</Label>
          <Label x={1156} y={469} color="#8b0000">S1</Label>
          <Label x={1156} y={597} color="#8b0000">S2</Label>
          <rect x="853" y="309" width="579" height="106" fill="#6495ed" fillOpacity="0.4" stroke="#6495ed" strokeWidth="2" />
        </g>
      </Plot>
      <Scale>
        <g transform="translate(0 -51)">
          <ScaleTick y={84} text="" />
          {PRICES.map((p) => (p === 2775 ? null : <ScaleTick key={p} y={priceY(p)} text={p.toFixed(2)} />))}
          <PriceFlag y={302} fill="#000" text="2777.75" />
          <PriceFlag y={400} fill="#800000" text="2774.93" />
        </g>
      </Scale>
    </Pane>
    <Pane $height={133}>
      <Plot>
        <g transform="translate(-490 -668)">
          <Level y={697} color="#006400" />
          <Level y={732} color="#45454a" dash />
          <Level y={768} color="#8b0000" />
          <Trace parts={rStochSlow} color="#8b0000" />
          <Trace parts={rStochFast} color="#0000cd" />
        </g>
      </Plot>
      <Scale>
        <g transform="translate(0 -668)">
          {[[674, ''], [697, '80'], [721, '60'], [745, '40'], [768, '20'], [791, '']].map(([y, t]) => (
            <ScaleTick key={y} y={y as number} text={t as string} />
          ))}
        </g>
      </Scale>
      <PaneCaption $top={5}>Stochastics(ES 03-19 (2/1 RnkBrs),14,21,1), Stochastics(ES 03-19 (2/1 RnkBrs),3,7,3)</PaneCaption>
    </Pane>
    <Pane $height={118}>
      <Plot>
        <g transform="translate(-490 -801)">
          <Level y={861} color="#ffd700" />
          <Trace parts={rMacd} color="#b22222" width={2} />
          <Trace parts={rSignal} color="#0000ff" width={1.800} />
        </g>
      </Plot>
      <Scale>
        <g transform="translate(0 -801)">
          {[[819, '0.4'], [840, '0.2'], [861, '0'], [882, '-0.2'], [903, '-0.4']].map(([y, t]) => (
            <ScaleTick key={y} y={y as number} text={t as string} />
          ))}
        </g>
      </Scale>
      <PaneCaption $top={5}>MACD(ES 03-19 (2/1 RnkBrs),6,11,3)</PaneCaption>
      <PaneCaption $bottom={8}>© 2019 NinjaTrader, LLC</PaneCaption>
    </Pane>
    <TimeAxis times={rTimes} originX={490} rightGap={62} />
  </ChartArea>
);

const ArrowGlyph = ({ flip }: { flip?: boolean }) => (
  <svg width="6" height="8" viewBox="0 0 6 8" fill="#fff"><path d={flip ? 'M1 0 5 4 1 8z' : 'M5 0 1 4 5 8z'} /></svg>
);

export default function App() {
  return (
    <>
      <GlobalStyle />
      <Desktop>
        <Window $width={480}>
          <TitleBar $height={29}>
            <WindowLabel>Chart</WindowLabel>
            <Pickers indent={22} period="4/2 RnkBrs" />
            <LinkGroup>
              <IconButton aria-label="Window menu" $size={18}>
                <svg width="12" height="7" viewBox="0 0 12 7" fill="#cfcfcf"><path d="M0 0H12L6 6z" /></svg>
              </IconButton>
              <LinkSwatch aria-label="Instrument link" $color="#aeaaae" />
              <LinkSwatch aria-label="Interval link" $color="#ffa500" />
            </LinkGroup>
          </TitleBar>
          <Body>
            <LeftChart />
            <ScrollTrack>
              <ScrollButton aria-label="Scroll left"><ArrowGlyph /></ScrollButton>
            </ScrollTrack>
          </Body>
          <TabRow $indent={32} $height={40}>
            <SmallTab aria-label="Previous tabs" $width={21} $gap={8}>
              <svg width="7" height="12" viewBox="0 0 7 12" fill="#d0d0d0"><path d="M7 0V12L0 6z" /></svg>
            </SmallTab>
            <Tab $width={128}>ES - 233 Tick</Tab>
            <Tab $width={148}>CL - AC1 Renko</Tab>
            <ActiveTab $width={150}>ES - AC1 Renko</ActiveTab>
          </TabRow>
        </Window>
        <Window>
          <TitleBar $height={41}>
            <WindowLabel>Chart</WindowLabel>
            <Pickers indent={24} period="2/1 RnkBrs" />
            <ToolStrip role="toolbar" aria-label="Chart tools">
              {chartTools.map(([name, art]) => (
                <IconButton key={name} aria-label={name}><Glyph>{art}</Glyph></IconButton>
              ))}
            </ToolStrip>
            <Clock>09:49:27</Clock>
          </TitleBar>
          <RightBody>
            <RightChart />
            <ScrollTrack>
              <ScrollButton aria-label="Scroll left"><ArrowGlyph /></ScrollButton>
              <ScrollGrip aria-label="Scroll thumb" />
              <ScrollButton aria-label="Scroll right"><ArrowGlyph flip /></ScrollButton>
            </ScrollTrack>
          </RightBody>
          <TabRow $indent={35} $height={39}>
            <Tab $width={117}>CL - 89 Tick</Tab>
            <Tab $width={117}>ES - 89 Tick</Tab>
            <Tab $width={143}>CL - EC Renko</Tab>
            <ActiveTab $width={147}>ES - EC Renko</ActiveTab>
            <SmallTab aria-label="Add tab" $width={30} $gap={0}>
              <svg width="12" height="12" viewBox="0 0 12 12" stroke="#dcdcdc" strokeWidth="2.500"><path d="M6 0V12M0 6H12" /></svg>
            </SmallTab>
          </TabRow>
        </Window>
        <NeighbourEdge />
      </Desktop>
    </>
  );
}
